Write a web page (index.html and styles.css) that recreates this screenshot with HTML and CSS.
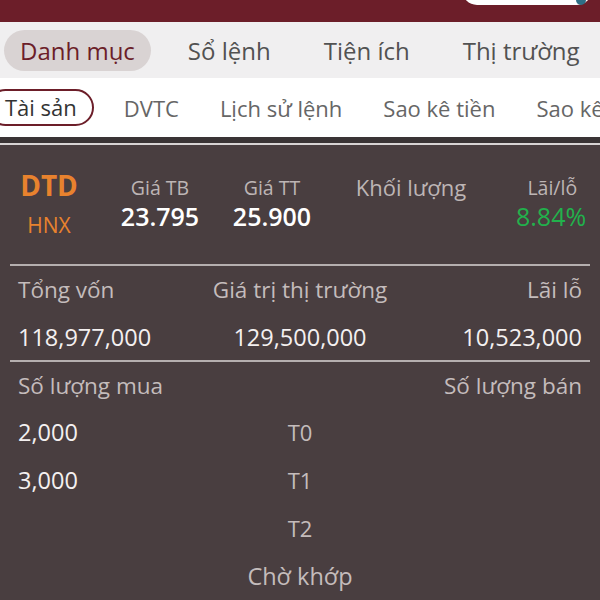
FILE: index.html
```html
<!DOCTYPE html>
<html lang="vi">
<head>
    <meta charset="UTF-8">
    <meta name="viewport" content="width=device-width, initial-scale=1.0">
    <title>Danh mục - Tài sản</title>
    <link rel="stylesheet" href="styles.css">
</head>
<body>

    <!-- Top bar, search box scrolled half out of view -->
    <div class="topbar">
        <div class="search-pill"><span class="search-dot"></span></div>
    </div>

    <!-- Main tabs -->
    <nav class="tabs">
        <span class="tab active">Danh mục</span>
        <span class="tab">Sổ lệnh</span>
        <span class="tab">Tiện ích</span>
        <span class="tab">Thị trường</span>
    </nav>

    <!-- Sub tabs -->
    <nav class="subtabs">
        <span class="subtab active">Tài sản</span>
        <span class="subtab">DVTC</span>
        <span class="subtab">Lịch sử lệnh</span>
        <span class="subtab">Sao kê tiền</span>
        <span class="subtab">Sao kê</span>
    </nav>

    <div class="divider"></div>

    <main class="panel">
        <div class="stock-row">
            <div class="symbol">
                <div class="code">DTD</div>
                <div class="exchange">HNX</div>
            </div>
            <div class="col">
                <div class="label">Giá TB</div>
                <div class="value">23.795</div>
            </div>
            <div class="col">
                <div class="label">Giá TT</div>
                <div class="value">25.900</div>
            </div>
            <div class="col">
                <div class="label big">Khối lượng</div>
            </div>
            <div class="col right">
                <div class="label pl">Lãi/lỗ</div>
                <div class="value up">8.84%</div>
            </div>
        </div>

        <div class="totals">
            <div class="t-label">Tổng vốn</div>
            <div class="t-label mid">Giá trị thị trường</div>
            <div class="t-label end">Lãi lỗ</div>
            <div class="t-value">118,977,000</div>
            <div class="t-value mid">129,500,000</div>
            <div class="t-value end">10,523,000</div>
        </div>

        <div class="qty">
            <div class="t-label">Số lượng mua</div>
            <div class="t-label"></div>
            <div class="t-label end">Số lượng bán</div>

            <div class="q-value">2,000</div>
            <div class="q-day">T0</div>
            <div class="q-value end"></div>

            <div class="q-value">3,000</div>
            <div class="q-day">T1</div>
            <div class="q-value end"></div>

            <div class="q-value"></div>
            <div class="q-day">T2</div>
            <div class="q-value end"></div>

            <div class="q-value"></div>
            <div class="q-day pending">Chờ khớp</div>
            <div class="q-value end"></div>
        </div>
    </main>

</body>
</html>
```

FILE: styles.css
```css
body {
    margin: 0;
    font-family: "Open Sans", "Noto Sans", sans-serif;
    background-color: #493e40;
    overflow: hidden;
}
.topbar {
    height: 22px;
    background-color: #6c1e29;
    display: flex;
    justify-content: flex-end;
    overflow: hidden;
}
.search-pill {
    width: 130px;
    height: 30px;
    margin-top: -25px;
    margin-right: 8px;
    background-color: #fff;
    border-radius: 15px;
    position: relative;
}
.search-dot {
    position: absolute;
    right: 6px;
    top: 20px;
    width: 10px;
    height: 10px;
    border-radius: 50%;
    background-color: #2e6f86;
}
.tabs {
    height: 56px;
    background-color: #f0eff0;
    display: flex;
    align-items: center;
    gap: 21px;
    padding-left: 4px;
    white-space: nowrap;
}
.tab {
    font-size: 24px;
    color: #525252;
    padding: 0 16px;
    line-height: 41px;
    border-radius: 21px;
}
.tab.active {
    background-color: #d9d3d3;
    color: #6c1e29;
}
.subtabs {
    height: 59px;
    background-color: #fff;
    display: flex;
    align-items: center;
    gap: 41px;
    margin-left: -13px;
    white-space: nowrap;
    overflow: hidden;
}
.subtab {
    font-size: 22px;
    color: #666;
}
.subtab.active {
    color: #333;
    border: 2px solid #6c1e29;
    border-radius: 19px;
    padding: 0 15px 0 16px;
    line-height: 33px;
    margin-right: -11px;
}
.divider {
    height: 6px;
    background-color: #3a3435;
    border-bottom: 2px solid #d8d4d4;
}
.panel {
    padding: 0 10px;
}
.stock-row {
    display: grid;
    grid-template-columns: 66px 68px 68px 122px 1fr;
    column-gap: 44px;
    padding: 24px 4px 25px 6px;
    border-bottom: 2px solid #b5afaf;
}
.symbol {
    display: flex;
    flex-direction: column;
    align-items: center;
    color: #e8822e;
}
.code {
    font-size: 28px;
    font-weight: 700;
    line-height: 32px;
}
.exchange {
    font-size: 21px;
    line-height: 28px;
    margin-top: 10px;
}
.col {
    display: flex;
    flex-direction: column;
    align-items: center;
    white-space: nowrap;
}
.col.right {
    align-items: flex-end;
}
.label {
    font-size: 19.5px;
    line-height: 24px;
    color: #bdb5b5;
    padding-top: 7px;
}
.label.big {
    font-size: 22px;
    padding-top: 6px;
}
.label.pl {
    margin-right: 9px;
}
.value {
    font-size: 25px;
    font-weight: 600;
    line-height: 32px;
    color: #fff;
}
.value.up {
    color: #22b14c;
    font-weight: 400;
}
.totals, .qty {
    display: grid;
    grid-template-columns: 1fr 1fr 1fr;
    padding: 0 8px;
    white-space: nowrap;
}
.totals {
    padding-top: 10px;
    padding-bottom: 8px;
    border-bottom: 2px solid #b5afaf;
}
.t-label {
    font-size: 22.5px;
    line-height: 28px;
    color: #c4bcbc;
}
.t-value {
    font-size: 23.5px;
    line-height: 30px;
    color: #f4f0f0;
    margin-top: 18px;
}
.mid {
    text-align: center;
}
.end {
    text-align: right;
}
.qty {
    padding-top: 10px;
}
.qty .t-label {
    padding-bottom: 8px;
}
.q-value {
    font-size: 23.5px;
    line-height: 48px;
    color: #f4f0f0;
}
.q-day {
    font-size: 22px;
    line-height: 48px;
    color: #c4bcbc;
    text-align: center;
}
.q-day.pending {
    font-size: 23.5px;
}
```
